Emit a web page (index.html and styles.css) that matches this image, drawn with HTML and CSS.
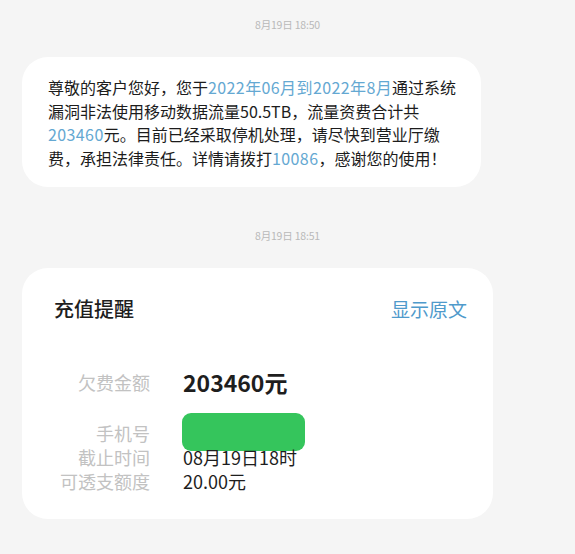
FILE: index.html
```html
<!DOCTYPE html>
<html lang="zh-CN">
<head>
<meta charset="utf-8">
<title>短信</title>
<link rel="stylesheet" href="styles.css">
</head>
<body>
<main class="thread">
  <div class="time first">8月19日 18:50</div>
  <div class="bubble">
    尊敬的客户您好，您于<span class="hl">2022年06月到2022年8月</span>通过系统<br>漏洞非法使用移动数据流量50.5TB，流量资费合计共<br><span class="hl">203460</span>元。目前已经采取停机处理，请尽快到营业厅缴<br>费，承担法律责任。详情请拨打<span class="hl">10086</span>，感谢您的使用！
  </div>
  <div class="time second">8月19日 18:51</div>
  <section class="card">
    <header class="card-head">
      <h2 class="card-title">充值提醒</h2>
      <span class="card-link">显示原文</span>
    </header>
    <dl class="fields">
      <dt class="label amount-label">欠费金额</dt>
      <dd class="value amount">203460元</dd>
      <dt class="label phone-label">手机号</dt>
      <dd class="value"><span class="mask"></span></dd>
      <dt class="label">截止时间</dt>
      <dd class="value">08月19日18时</dd>
      <dt class="label">可透支额度</dt>
      <dd class="value">20.00元</dd>
    </dl>
  </section>
</main>
</body>
</html>
```
FILE: styles.css
```css
html, body {
  margin: 0;
  padding: 0;
  background: #f5f5f5;
}
body {
  width: 575px;
  height: 554px;
  overflow: hidden;
  font-family: "Noto Sans CJK SC", "Noto Sans", sans-serif;
  color: #222;
}
.thread {
  display: flex;
  flex-direction: column;
  padding: 0 0 0 22px;
}
.time {
  align-self: center;
  margin-left: -22px;
  font-size: 10.5px;
  line-height: 14px;
  color: #b9b9b9;
  letter-spacing: -0.2px;
}
.time.first {
  margin-top: 18px;
}
.bubble {
  margin-top: 25px;
  width: 459px;
  box-sizing: border-box;
  background: #fff;
  border-radius: 26px;
  padding: 19px 0 17px 26px;
  font-size: 16px;
  line-height: 23.5px;
  font-weight: 400;
  color: #1c1c1c;
}
.hl {
  color: #64a8d2;
  letter-spacing: 0.4px;
}
.time.second {
  margin-top: 42px;
}
.card {
  margin-top: 25px;
  width: 471px;
  box-sizing: border-box;
  background: #fff;
  border-radius: 26px;
  padding: 26px 26px 26px 32px;
}
.card-head {
  display: flex;
  justify-content: space-between;
  align-items: center;
  height: 28px;
}
.card-title {
  margin: 0;
  font-size: 20px;
  font-weight: 500;
  color: #1e1e1e;
}
.card-link {
  font-size: 19px;
  color: #4f9acb;
}
.fields {
  display: grid;
  grid-template-columns: 96px auto;
  column-gap: 33px;
  margin: 45px 0 0;
  font-size: 18px;
  line-height: 24px;
}
.label {
  margin: 0;
  text-align: right;
  color: #c2c2c2;
  font-size: 18px;
}
.value {
  margin: 0;
  color: #1e1e1e;
}
.amount-label {
  line-height: 30px;
  margin-bottom: 24px;
}
.amount {
  font-size: 23px;
  font-weight: 600;
  line-height: 30px;
  margin-bottom: 24px;
}
.mask {
  display: block;
  width: 123px;
  height: 38px;
  margin: -8px 0 -6px -1px;
  background: #35c55c;
  border-radius: 9px;
}
```
